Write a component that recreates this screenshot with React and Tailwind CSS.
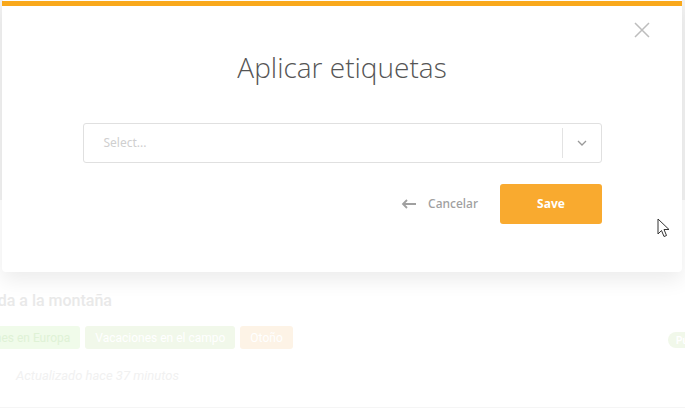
import React from "react";

function Background() {
  return (
    <div className="relative h-[413px] w-[685px] overflow-hidden bg-white" style={{ fontFamily: "Roboto, 'Liberation Sans', sans-serif" }}>
      <div className="absolute left-0 top-0 h-[200px] w-[3px] bg-[#f2f2f2]" />
      <div className="absolute right-0 top-0 h-[200px] w-[3px] bg-[#f2f2f2]" />
      <div className="pt-[289px]">
        <div className="-ml-[34px] text-[16px] font-medium text-[#e9e9e9]">Subida a la montaña</div>
        <div className="relative mt-[13px] flex h-[23px] items-center gap-[5px] -ml-[58px]">
          <span className="flex h-[23px] items-center rounded-[3px] bg-[#f0fbea] px-[10px] text-[12px] text-[#dff2d6]">Vacaciones en Europa</span>
          <span className="flex h-[23px] items-center rounded-[3px] bg-[#f1f8ea] px-[10px] text-[12px] text-white">Vacaciones en el campo</span>
          <span className="flex h-[23px] items-center rounded-[3px] bg-[#fdf3e6] px-[10px] text-[12px] text-white">Otoño</span>
        </div>
        <div className="ml-[16px] mt-[17px] text-[13px] italic text-[#f1f1f1]">Actualizado hace 37 minutos</div>
      </div>
      <span className="absolute left-[668px] top-[332px] flex h-[16px] items-center rounded-full bg-[#f1f8ea] px-[8px] text-[10px] font-bold text-white">Pública</span>
      <div className="absolute bottom-[5px] left-0 h-[1px] w-full bg-[#f5f5f5]" />
    </div>
  );
}

export default function App() {
  return (
    <div className="relative h-[413px] w-[685px] overflow-hidden">
      <Background />
      <div className="absolute left-[2px] top-[1px] w-[680px] rounded-b-[4px] bg-white shadow-[0_8px_20px_rgba(0,0,0,0.08)]">
        <div className="h-[5px] w-full bg-[#f9a81b]" />
        <button className="absolute right-[32px] top-[21px] h-[16px] w-[16px]">
          <svg viewBox="0 0 16 16" className="h-[16px] w-[16px]" fill="none" stroke="#bdbdbd" strokeWidth="1.5">
            <path d="M1 1 L15 15 M15 1 L1 15" />
          </svg>
        </button>
        <div className="flex flex-col items-center px-[80px] pb-[48px]">
          <h1
            className="mt-[40px] h-[42px] text-center text-[28px] font-light leading-[42px] text-[#555]"
            style={{ fontFamily: "'Open Sans', sans-serif" }}
          >
            Aplicar etiquetas
          </h1>
          <div className="mt-[35px] flex h-[40px] w-[519px] items-center rounded-[3px] border border-[#e0e0e0] bg-white">
            <div className="flex-1 pl-[20px] text-[12px] text-[#cfcfcf]">Select...</div>
            <div className="h-[30px] w-[1px] bg-[#e3e3e3]" />
            <div className="flex w-[38px] items-center justify-center">
              <svg viewBox="0 0 10 6" className="h-[6px] w-[10px]" fill="none" stroke="#999" strokeWidth="1.3">
                <path d="M1 1 L5 5 L9 1" />
              </svg>
            </div>
          </div>
          <div className="mt-[21px] flex w-full items-center justify-end">
            <button className="mr-[22px] flex items-center gap-[11px] text-[12px] font-medium text-[#a0a0a0]">
              <svg viewBox="0 0 16 10" className="h-[10px] w-[16px]" fill="none" stroke="#a0a0a0" strokeWidth="1.8">
                <path d="M15 5 H2 M6 1 L2 5 L6 9" />
              </svg>
              Cancelar
            </button>
            <button className="h-[40px] w-[102px] rounded-[3px] bg-[#f9aa2f] text-[12px] font-bold text-white">Save</button>
          </div>
        </div>
      </div>
      <svg className="absolute left-[657px] top-[218px]" width="14" height="20" viewBox="0 0 14 20">
        <path d="M1 1 L1 16 L4.5 12.5 L7 18.5 L9.5 17.5 L7 11.5 L12 11.5 Z" fill="white" stroke="#333" strokeWidth="1" strokeLinejoin="round" />
      </svg>
    </div>
  );
}
